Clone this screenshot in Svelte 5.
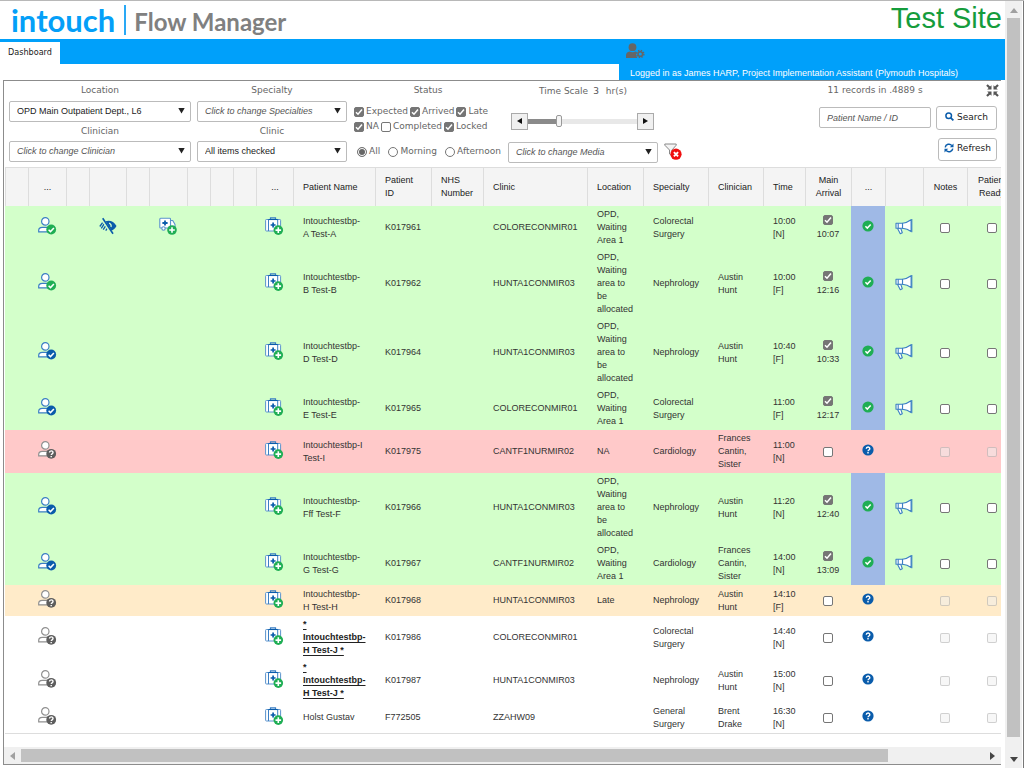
<script>
  const columns = [
    { w: 23 }, { w: 38, label: '...', mid: true }, { w: 23 }, { w: 37 }, { w: 23 }, { w: 38 },
    { w: 23 }, { w: 23 }, { w: 23 }, { w: 37, label: '...', mid: true },
    { w: 82, label: 'Patient Name' }, { w: 56, label: 'Patient\nID' }, { w: 52, label: 'NHS\nNumber' },
    { w: 104, label: 'Clinic' }, { w: 56, label: 'Location' }, { w: 65, label: 'Specialty' },
    { w: 55, label: 'Clinician' }, { w: 42, label: 'Time' }, { w: 46, label: 'Main\nArrival', mid: true },
    { w: 34, label: '...', mid: true }, { w: 38 }, { w: 44, label: 'Notes', mid: true },
    { w: 49, label: 'Patient\nReady', mid: true }
  ];

  const area1 = 'OPD,\nWaiting\nArea 1';
  const allocated = 'OPD,\nWaiting\narea to\nbe\nallocated';

  const rows = [
    { tone: 'green', who: 'green', extra: true, name: 'Intouchtestbp-\nA Test-A', id: 'K017961', clinic: 'COLORECONMIR01', loc: area1, spec: 'Colorectal\nSurgery', doc: '', time: '10:00\n[N]', arrived: '10:07' },
    { tone: 'green', who: 'green', name: 'Intouchtestbp-\nB Test-B', id: 'K017962', clinic: 'HUNTA1CONMIR03', loc: allocated, spec: 'Nephrology', doc: 'Austin\nHunt', time: '10:00\n[F]', arrived: '12:16' },
    { tone: 'green', who: 'blue', name: 'Intouchtestbp-\nD Test-D', id: 'K017964', clinic: 'HUNTA1CONMIR03', loc: allocated, spec: 'Nephrology', doc: 'Austin\nHunt', time: '10:40\n[F]', arrived: '10:33' },
    { tone: 'green', who: 'blue', name: 'Intouchtestbp-\nE Test-E', id: 'K017965', clinic: 'COLORECONMIR01', loc: area1, spec: 'Colorectal\nSurgery', doc: '', time: '11:00\n[F]', arrived: '12:17' },
    { tone: 'red', who: 'grey', name: 'Intouchtestbp-I\nTest-I', id: 'K017975', clinic: 'CANTF1NURMIR02', loc: 'NA', spec: 'Cardiology', doc: 'Frances\nCantin,\nSister', time: '11:00\n[N]' },
    { tone: 'green', who: 'blue', name: 'Intouchtestbp-\nFff Test-F', id: 'K017966', clinic: 'HUNTA1CONMIR03', loc: allocated, spec: 'Nephrology', doc: 'Austin\nHunt', time: '11:20\n[N]', arrived: '12:40' },
    { tone: 'green', who: 'blue', name: 'Intouchtestbp-\nG Test-G', id: 'K017967', clinic: 'CANTF1NURMIR02', loc: area1, spec: 'Cardiology', doc: 'Frances\nCantin,\nSister', time: '14:00\n[N]', arrived: '13:09' },
    { tone: 'amber', who: 'grey', name: 'Intouchtestbp-\nH Test-H', id: 'K017968', clinic: 'HUNTA1CONMIR03', loc: 'Late', spec: 'Nephrology', doc: 'Austin\nHunt', time: '14:10\n[F]' },
    { tone: 'plain', who: 'grey', flag: true, name: '*\nIntouchtestbp-\nH Test-J *', id: 'K017986', clinic: 'COLORECONMIR01', loc: '', spec: 'Colorectal\nSurgery', doc: '', time: '14:40\n[N]' },
    { tone: 'plain', who: 'grey', flag: true, name: '*\nIntouchtestbp-\nH Test-J *', id: 'K017987', clinic: 'HUNTA1CONMIR03', loc: '', spec: 'Nephrology', doc: 'Austin\nHunt', time: '15:00\n[N]' },
    { tone: 'plain', who: 'grey', name: 'Holst Gustav', id: 'F772505', clinic: 'ZZAHW09', loc: '', spec: 'General\nSurgery', doc: 'Brent\nDrake', time: '16:30\n[N]' }
  ];

  const badge = { green: '#1fae54', blue: '#0a5cab', grey: '#5d5d5d' };

  let statuses = $state([
    { label: 'Expected', on: true }, { label: 'Arrived', on: true }, { label: 'Late', on: true },
    { label: 'NA', on: true }, { label: 'Completed', on: false }, { label: 'Locked', on: true }
  ]);
  let session = $state('All');
  let scale = $state(3);
</script>

{#snippet check(cx, cy, r, fill)}
  <circle {cx} {cy} {r} {fill} />
  <path d="M{cx - 2.6} {cy + 0.2}l1.9 1.9 3.4-3.7" fill="none" stroke="#fff" stroke-width="1.5" />
{/snippet}

{#snippet question(cx, cy, r, fill)}
  <circle {cx} {cy} {r} {fill} />
  <path d="M{cx - 1.7} {cy - 1.2}c0-2.3 3.5-2.3 3.5-.1 0 1.4-1.7 1.2-1.7 2.5M{cx} {cy + 2.1}v1.4" fill="none" stroke="#fff" stroke-width="1.4" />
{/snippet}

{#snippet plus(cx, cy)}
  <circle {cx} {cy} r="4.8" fill="#1fae54" />
  <path d="M{cx - 2.8} {cy}h5.6M{cx} {cy - 2.8}v5.6" stroke="#fff" stroke-width="1.6" />
{/snippet}

{#snippet person(kind)}
  <svg class="icon" width="19" height="18" viewBox="0 0 19 18" aria-hidden="true">
    <g fill="#fff" stroke={kind === 'grey' ? '#909090' : '#3b7fc4'} stroke-width="1.2">
      <circle cx="7.3" cy="4.4" r="3.7" />
      <path d="M.7 14.800v-1.300c0-2 1.500-3.100 3.500-3.100h6c1.800 0 3 1 3 2.700v1.700z" />
    </g>
    {#if kind === 'grey'}
      {@render question(13.2, 12.800, 4.900, badge.grey)}
    {:else}
      {@render check(13.2, 12.500, 4.900, badge[kind])}
    {/if}
  </svg>
{/snippet}

{#snippet suitcase()}
  <svg class="icon" width="19" height="18" viewBox="0 0 19 18" aria-hidden="true">
    <path d="M5.500 2.500V.9h5v1.600" fill="none" stroke="#3b7fc4" stroke-width="1.200" />
    <rect x=".6" y="2.500" width="15" height="11.500" rx=".8" fill="#fff" stroke="#5b93cd" />
    <path d="M3.500 2.500v11.500M12.700 2.500v11.500" stroke="#3b7fc4" />
    <path d="M3.500 2.500h9.200" stroke="#0a5cab" stroke-width="1.100" />
    <path d="M5.600 8h5M8.100 5.500v5" stroke="#0a5cab" stroke-width="1.700" />
    {@render plus(13.300, 13.100)}
  </svg>
{/snippet}

{#snippet eyeOff()}
  <svg class="icon" width="18" height="18" viewBox="0 0 18 18" aria-hidden="true">
    <path d="M6.500 4.300c4.500-1.500 8.500.4 11 4.700-1.400 2.500-3 4-5.200 4.700z" fill="#0a5cab" />
    <path d="M.8 9.500L3.600 5.700M2.300 11.300l3-4.600M4.200 12.700l2.600-4M6.700 13.700l1.600-2.400" stroke="#0a5cab" stroke-width="1.300" />
    <path d="M10 6.200a2.900 2.900 0 0 1 2 3.800" fill="none" stroke="#d4ffca" stroke-width="1.300" />
    <path d="M2.900 1.700l10.200 15.300" stroke="#d4ffca" stroke-width="2.600" />
    <path d="M3.700 1.200l10.300 15.600" stroke="#0a5cab" stroke-width="1.600" />
  </svg>
{/snippet}

{#snippet ambulance()}
  <svg class="icon" width="19" height="18" viewBox="0 0 19 18" aria-hidden="true">
    <g fill="#fff" stroke="#5b93cd" stroke-width="1.100">
      <path d="M11.500 3.500h2.200l2.300 4v4.500h-4.500z" />
      <rect x=".8" y="1.300" width="10.700" height="9.700" rx=".8" />
      <circle cx="4.500" cy="11.500" r="1.700" />
    </g>
    <path d="M3.400 6h5.200M6 3.400v5.200" stroke="#0a5cab" stroke-width="1.800" />
    {@render plus(13, 13)}
  </svg>
{/snippet}

{#snippet megaphone()}
  <svg class="icon" width="18" height="17" viewBox="0 0 18 17" aria-hidden="true">
    <g fill="#fff" stroke="#3b7fc4" stroke-width="1.100" stroke-linejoin="round">
      <path d="M2.600 10.500h3.200l1.500 4.200-2 1z" />
      <path d="M7.500 5.200c3.400-.4 6-1.600 8.600-3.500v11.800c-2.600-1.900-5.200-2.900-8.600-3.200z" />
      <path d="M1 5.200h6.500v5.100H1z" />
      <path d="M3.200 5.200v5.100" />
    </g>
    <path d="M16.800 1v13.200" stroke="#3b7fc4" stroke-width="1.100" />
  </svg>
{/snippet}

{#snippet picker(id, text, hint)}
  <div class="picker">
    <select {id} class:hint aria-label={text}><option>{text}</option></select>
    <svg width="7" height="6" viewBox="0 0 7 6" aria-hidden="true"><path d="M.3 0h6.400L3.500 5.600z" fill="#222" /></svg>
  </div>
{/snippet}

<div class="window">
  <div class="page">
    <header>
      <div class="brand">
        <span class="logo">intouch</span>
        <span class="product">Flow Manager</span>
        <span class="site">Test Site</span>
      </div>
      <div class="bar">
        <nav><a class="tab" href="#dashboard">Dashboard</a></nav>
        <div class="user">
          <svg width="19" height="16" viewBox="0 0 19 16" aria-hidden="true">
            <circle cx="6.500" cy="4.200" r="3.900" fill="#666" />
            <path d="M0 15v-2.500c0-2.300 1.300-3.600 3.600-4 1.700 1.100 4.100 1.100 5.800 0 .6.100 1 .3 1.400.500-1 1.800-.8 4.200.6 6z" fill="#666" />
            <circle cx="14.300" cy="11" r="2.300" fill="none" stroke="#666" stroke-width="1.600" />
            <circle cx="14.300" cy="11" r="3.600" fill="none" stroke="#666" stroke-width="1.300" stroke-dasharray="1.500 1.327" />
          </svg>
          <p>Logged in as James HARP, Project Implementation Assistant (Plymouth Hospitals)</p>
        </div>
      </div>
    </header>

    <main>
      <form class="filters" onsubmit={(e) => e.preventDefault()}>
        <div class="field wide">
          <label for="location">Location</label>
          {@render picker('location', 'OPD Main Outpatient Dept., L6', false)}
          <label for="clinician">Clinician</label>
          {@render picker('clinician', 'Click to change Clinician', true)}
        </div>
        <div class="field">
          <label for="specialty">Specialty</label>
          {@render picker('specialty', 'Click to change Specialties', true)}
          <label for="clinic">Clinic</label>
          {@render picker('clinic', 'All items checked', false)}
        </div>
        <div class="status">
          <span class="title">Status</span>
          <div class="ticks">
            {#each statuses as s}
              <label><input type="checkbox" bind:checked={s.on} />{s.label}</label>
            {/each}
          </div>
          <div class="radios">
            {#each ['All', 'Morning', 'Afternoon'] as s}
              <label><input type="radio" name="session" value={s} bind:group={session} />{s}</label>
            {/each}
          </div>
        </div>
        <div class="field">
          <label for="scale" class="scale"><span>Time Scale</span><b>{scale}</b><span>hr(s)</span></label>
          <div class="slider">
            <button type="button" aria-label="Less" onclick={() => (scale = Math.max(0, scale - 1))}>
              <svg width="5" height="6" viewBox="0 0 5 6"><path d="M5 0v6L0 3z" fill="#111" /></svg>
            </button>
            <input id="scale" type="range" min="0" max="11" bind:value={scale} />
            <button type="button" aria-label="More" onclick={() => (scale = Math.min(11, scale + 1))}>
              <svg width="5" height="6" viewBox="0 0 5 6"><path d="M0 0v6l5-3z" fill="#111" /></svg>
            </button>
          </div>
          {@render picker('media', 'Click to change Media', true)}
        </div>
        <button type="button" class="clear" aria-label="Clear filters">
          <svg width="18" height="18" viewBox="0 0 18 18">
            <path d="M.8 1h11.400v1.200L8 7v6l-2.500-2V7L.8 2.200z" fill="#f4f4f4" stroke="#888" />
            <circle cx="12" cy="11.200" r="5.600" fill="#f00f0f" />
            <path d="M9.900 9.100l4.200 4.200M14.100 9.100l-4.200 4.200" stroke="#fff" stroke-width="1.900" />
          </svg>
        </button>
        <div class="find">
          <p>11 records in .4889 s</p>
          <button type="button" class="expand" aria-label="Full screen">
            <svg width="13" height="13" viewBox="0 0 13 13">
              <path d="M5.500 5.500H1.200l1.400-1.400L.2 1.700 1.700.2l2.400 2.400 1.400-1.400zM7.500 5.500V1.200l1.400 1.400L11.300.2l1.500 1.500-2.400 2.400 1.400 1.400zM5.500 7.500v4.300l-1.400-1.400-2.400 2.400-1.500-1.500 2.400-2.400-1.400-1.400zM7.500 7.500h4.300l-1.400 1.400 2.400 2.400-1.500 1.500-2.400-2.400-1.400 1.400z" fill="#555" />
            </svg>
          </button>
          <input type="text" placeholder="Patient Name / ID" aria-label="Patient Name / ID" />
          <button type="submit" class="btn">
            <svg width="9" height="9" viewBox="0 0 9 9" aria-hidden="true"><circle cx="3.700" cy="3.700" r="2.800" fill="none" stroke="#0a5cab" stroke-width="1.500" /><path d="M5.800 5.800l2.600 2.600" stroke="#0a5cab" stroke-width="1.800" /></svg>
            Search
          </button>
          <button type="button" class="btn refresh">
            <svg width="10" height="10" viewBox="0 0 10 10" aria-hidden="true"><path d="M1.200 4.300a3.800 3.800 0 0 1 6.700-1.700M8.800 5.700a3.800 3.800 0 0 1-6.700 1.700" fill="none" stroke="#0a5cab" stroke-width="1.500" /><path d="M9.500.5v3.700H5.800zM.5 9.500V5.800h3.700z" fill="#0a5cab" /></svg>
            Refresh
          </button>
        </div>
      </form>

      <div class="grid">
        <table>
          <colgroup>
            {#each columns as c}<col style="width: {c.w}px" />{/each}
          </colgroup>
          <thead>
            <tr>{#each columns as c}<th class:mid={c.mid}>{c.label ?? ''}</th>{/each}</tr>
          </thead>
          <tbody>
            {#each rows as r}
              <tr class={r.tone}>
                <td></td>
                <td class="ic">{@render person(r.who)}</td>
                <td></td>
                <td class="ic">{#if r.extra}{@render eyeOff()}{/if}</td>
                <td></td>
                <td class="ic">{#if r.extra}{@render ambulance()}{/if}</td>
                <td></td>
                <td></td>
                <td></td>
                <td class="ic">{@render suitcase()}</td>
                <td class:flag={r.flag}>{r.name}</td>
                <td>{r.id}</td>
                <td></td>
                <td>{r.clinic}</td>
                <td>{r.loc}</td>
                <td>{r.spec}</td>
                <td>{r.doc}</td>
                <td>{r.time}</td>
                <td class="mid"><label class="arrival"><input type="checkbox" checked={!!r.arrived} aria-label="Main arrival" />{#if r.arrived}<span>{r.arrived}</span>{/if}</label></td>
                <td class="ic state">
                  <svg class="icon" width="12" height="12" viewBox="0 0 12 12" aria-hidden="true">
                    {#if r.arrived}{@render check(6, 6, 5.600, badge.green)}{:else}{@render question(6, 6, 5.600, badge.blue)}{/if}
                  </svg>
                </td>
                <td class="ic">{#if r.arrived}{@render megaphone()}{/if}</td>
                <td class="mid"><input type="checkbox" disabled={!r.arrived} aria-label="Notes" /></td>
                <td class="mid"><input type="checkbox" disabled={!r.arrived} aria-label="Patient ready" /></td>
              </tr>
            {/each}
          </tbody>
        </table>
      </div>

      <div class="hscroll" aria-hidden="true">
        <svg width="5" height="8" viewBox="0 0 5 8"><path d="M5 0v8L0 4z" fill="#a0a0a0" /></svg>
        <div class="track"><div class="thumb"></div></div>
        <svg width="5" height="8" viewBox="0 0 5 8"><path d="M0 0v8l5-4z" fill="#444" /></svg>
      </div>
    </main>
  </div>

  <div class="vscroll" aria-hidden="true">
    <svg width="8" height="5" viewBox="0 0 8 5"><path d="M0 5h8L4 0z" fill="#a0a0a0" /></svg>
    <div class="track"><div class="thumb"></div></div>
    <svg width="8" height="5" viewBox="0 0 8 5"><path d="M0 0h8L4 5z" fill="#444" /></svg>
  </div>
</div>

<style>
  :global(body) { background: #fff; }
  * { box-sizing: border-box; }
  p { margin: 0; }
  svg { display: block; flex: none; }

  .window {
    display: flex;
    min-height: 100vh;
    border-top: 1px solid #b8b8b8;
    font: 9px/13px "Liberation Sans", Arial, sans-serif;
    color: #333;
  }
  .page { flex: 1; min-width: 0; display: flex; flex-direction: column; }

  .brand { display: flex; align-items: center; height: 38px; padding: 0 3px 0 11px; }
  .logo {
    padding-right: 9px;
    border-right: 2px solid #2aa9f5;
    font: 700 31px/30px Lato, sans-serif;
    color: #049ff8;
  }
  .product { padding: 4px 0 0 8px; font: 700 24px/30px Lato, sans-serif; color: #808080; }
  .site { margin-left: auto; padding-bottom: 4px; font-size: 29px; line-height: 34px; color: #159c3c; }

  .bar { display: flex; align-items: flex-start; }
  nav { flex: 1; height: 25px; padding-top: 3px; background: #00a0fa; }
  .tab {
    display: inline-block;
    height: 22px;
    padding: 0 8px;
    background: #fff;
    font: 9px/20px "DejaVu Sans Condensed", "DejaVu Sans", sans-serif;
    color: #222;
    text-decoration: none;
  }
  .user { width: 386px; height: 41px; padding: 4px 7px 0; background: #00a0fa; color: #fff; }
  .user p { padding: 7px 4px 0; line-height: 15px; white-space: nowrap; }

  main {
    flex: 1;
    display: flex;
    flex-direction: column;
    min-width: 0;
    margin: 0 4px 3px 3px;
    border: solid #8c8c8c;
    border-width: 1px 0 1px 1px;
  }

  .filters {
    display: flex;
    gap: 6px;
    padding: 0 2px 4px 5px;
    font: 9px/13px "DejaVu Sans", sans-serif;
    color: #666;
  }
  .field { display: flex; flex-direction: column; width: 150px; }
  .field.wide { width: 182px; }
  .field > label { line-height: 19px; text-align: center; }
  .picker { position: relative; }
  .picker svg { position: absolute; right: 6px; top: 7px; pointer-events: none; }
  select, input[type="text"] {
    display: block;
    width: 100%;
    height: 21px;
    margin: 0;
    padding: 0 7px;
    border: 1px solid #bbb;
    border-radius: 2px;
    background: #fff;
    appearance: none;
    font: 9px/19px "Liberation Sans", Arial, sans-serif;
    color: #222;
  }
  select.hint, input::placeholder { font-style: italic; color: #555; }
  .field > label:first-child { line-height: 19px; padding-bottom: 1px; }

  .status { width: 149px; padding-left: 1px; }
  .title { display: block; line-height: 19px; text-align: center; }
  .status label { display: flex; align-items: center; gap: 2px; }
  .ticks { display: flex; flex-wrap: wrap; gap: 2px; padding-top: 5px; }
  .radios { display: flex; justify-content: space-between; padding: 12px 1px 0 3px; }

  input[type="checkbox"], input[type="radio"] {
    flex: none;
    display: block;
    width: 10px;
    height: 10px;
    margin: 0;
    border: 1px solid #767676;
    border-radius: 2px;
    background: #fff;
    appearance: none;
  }
  input[type="checkbox"]:checked {
    background: #757575 url("data:image/svg+xml,%3Csvg xmlns='http://www.w3.org/2000/svg' viewBox='0 0 8 8'%3E%3Cpath d='M1 4.200l2 2L7 1.600' fill='none' stroke='white' stroke-width='1.500'/%3E%3C/svg%3E") center / 8px 8px no-repeat;
  }
  input[type="checkbox"]:disabled { border-color: rgba(118, 118, 118, 0.3); background: rgba(239, 239, 239, 0.5); }
  input[type="radio"] { border-radius: 50%; }
  input[type="radio"]:checked { background: #666; box-shadow: inset 0 0 0 1px #fff; }

  .field > .scale { display: flex; justify-content: center; gap: 5px; padding: 1px 0 0; }
  .scale b { font-weight: 400; padding-right: 2px; color: #555; }
  .slider { display: flex; align-items: center; height: 40px; padding: 0 4px 2px 3px; }
  .slider button {
    display: flex;
    align-items: center;
    justify-content: center;
    width: 17px;
    height: 17px;
    padding: 0;
    border: 1px solid #aaa;
    background: #f0f0f0;
  }
  input[type="range"] {
    flex: 1;
    min-width: 0;
    height: 14px;
    margin: 0;
    appearance: none;
    background: linear-gradient(to right, #8a8a8a 28%, #e8e8e8 28%) center / 100% 5px no-repeat;
  }
  input[type="range"]::-webkit-slider-thumb {
    appearance: none;
    width: 6px;
    height: 12px;
    border: 1px solid #999;
    border-radius: 2px;
    background: #f4f4f4;
  }
  .clear { align-self: flex-end; margin-bottom: 2px; padding: 0; border: 0; background: none; }

  .find {
    display: grid;
    grid-template-columns: 112px auto;
    grid-template-rows: 18px 29px 26px;
    align-content: start;
    align-items: center;
    justify-items: end;
    gap: 4px 5px;
    margin-left: auto;
  }
  .find p { justify-self: center; }
  .expand { padding: 0; border: 0; background: none; }
  .btn {
    display: flex;
    align-items: center;
    gap: 3px;
    height: 24px;
    margin-right: 2px;
    padding: 0 8px 2px;
    border: 1px solid #bbb;
    border-radius: 3px;
    background: #fff;
    font: 9px/20px "DejaVu Sans", sans-serif;
    color: #222;
  }
  .refresh { grid-column: 2; height: 23px; padding: 0 5px 2px; }

  .grid { margin-left: 1px; overflow: hidden; }
  table {
    width: 100%;
    min-width: 1011px;
    table-layout: fixed;
    border-collapse: separate;
    border-spacing: 0;
    border-bottom: 1px solid #ddd;
  }
  th, td { padding: 2px 0 2px 10px; text-align: left; vertical-align: middle; white-space: pre-line; }
  th {
    height: 39px;
    padding-left: 9px;
    border: solid #ddd;
    border-width: 1px 0 0 1px;
    background: #f4f4f4;
    font-weight: 400;
    color: #222;
  }
  td { height: 31px; }
  th.mid, td.mid, td.ic { padding-left: 0; padding-right: 0; text-align: center; }
  td.ic { padding-bottom: 5px; white-space: normal; }
  .icon, td.mid input { margin: 0 auto; }
  .arrival { display: block; line-height: 12px; }
  .arrival span { display: block; padding-top: 3px; }
  .green { background: #d3ffca; }
  .red { background: #ffc9c9; }
  .amber { background: #ffebc9; }
  .green .state { background: #9fb9e6; }
  .flag { font-weight: 700; text-decoration: underline; text-underline-offset: 2px; color: #222; }

  .hscroll {
    display: flex;
    align-items: center;
    height: 17px;
    margin-top: auto;
    padding: 0 6px;
    gap: 6px;
    background: #f0f0f0;
  }
  .hscroll .track { flex: 1; height: 13px; }
  .hscroll .thumb { width: 90%; height: 100%; background: #c1c1c1; }

  .vscroll {
    display: flex;
    flex-direction: column;
    align-items: center;
    gap: 5px;
    width: 19px;
    padding: 7px 3px 6px 2px;
    border-right: 1px solid #777;
    background: #f0f0f0;
    box-shadow: inset -1px 0 #fff;
  }
  .vscroll .track { flex: 1; width: 13px; }
  .vscroll .thumb { height: 98%; background: #c1c1c1; }
</style>
